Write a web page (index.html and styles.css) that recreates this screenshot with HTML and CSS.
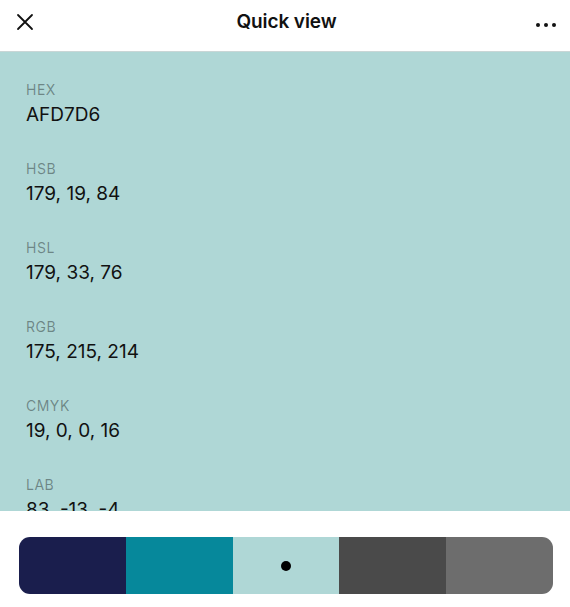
FILE: index.html
```html
<!DOCTYPE html>
<html>
<head>
<meta charset="utf-8">
<link rel="stylesheet" href="styles.css">
</head>
<body>
<div class="app">
  <header class="topbar">
    <button class="icon-btn close" aria-label="Close">
      <svg width="18" height="18" viewBox="0 0 18 18"><path d="M2 2 L16 16 M16 2 L2 16" stroke="#111" stroke-width="1.8" fill="none" stroke-linecap="round"/></svg>
    </button>
    <h1 class="title">Quick view</h1>
    <button class="icon-btn more" aria-label="More">
      <svg width="22" height="6" viewBox="0 0 22 6"><circle cx="3" cy="3" r="2" fill="#111"/><circle cx="11" cy="3" r="2" fill="#111"/><circle cx="19" cy="3" r="2" fill="#111"/></svg>
    </button>
  </header>
  <main class="swatch">
    <div class="field"><div class="label">HEX</div><div class="value">AFD7D6</div></div>
    <div class="field"><div class="label">HSB</div><div class="value">179, 19, 84</div></div>
    <div class="field"><div class="label">HSL</div><div class="value">179, 33, 76</div></div>
    <div class="field"><div class="label">RGB</div><div class="value">175, 215, 214</div></div>
    <div class="field"><div class="label">CMYK</div><div class="value">19, 0, 0, 16</div></div>
    <div class="field"><div class="label">LAB</div><div class="value">83, -13, -4</div></div>
  </main>
  <footer class="bottom">
    <div class="palette">
      <div class="chip c1"></div>
      <div class="chip c2"></div>
      <div class="chip c3 active"><span class="dot"></span></div>
      <div class="chip c4"></div>
      <div class="chip c5"></div>
    </div>
  </footer>
</div>
</body>
</html>
```
FILE: styles.css
```css
* { box-sizing: border-box; }
html, body { margin: 0; padding: 0; }
body {
  width: 570px;
  height: 607px;
  overflow: hidden;
  background: #fff;
  font-family: Inter, "Noto Sans", sans-serif;
  color: #111;
}
.app { display: flex; flex-direction: column; height: 607px; }
.topbar {
  height: 52px;
  flex: none;
  display: flex;
  align-items: flex-start;
  justify-content: space-between;
  padding: 0 10px 0 15px;
  border-bottom: 1px solid #c9d6d6;
}
.icon-btn {
  background: none;
  border: 0;
  padding: 0;
  display: flex;
  align-items: center;
  justify-content: center;
  cursor: pointer;
}
.close { width: 20px; height: 20px; margin-top: 12px; }
.more { width: 28px; height: 20px; margin-top: 15px; }
.title {
  margin: 10px 0 0 6px;
  font-size: 19px;
  line-height: 24px;
  font-weight: 600;
  letter-spacing: -0.1px;
}
.swatch {
  flex: none;
  height: 459px;
  overflow: hidden;
  background: #afd7d6;
  padding: 29px 26px 0;
  display: flex;
  flex-direction: column;
  gap: 33px;
}
.field { display: flex; flex-direction: column; gap: 5px; }
.label {
  font-size: 14px;
  line-height: 17px;
  letter-spacing: 0.5px;
  color: rgba(0, 0, 0, 0.38);
}
.value {
  font-size: 19px;
  line-height: 24px;
  color: #111;
}
.bottom {
  flex: 1;
  padding: 26px 17px 0 19px;
}
.palette {
  display: flex;
  height: 57px;
  border-radius: 11px;
  overflow: hidden;
}
.chip { flex: 1; display: flex; align-items: center; justify-content: center; }
.c1 { background: #1a1e4d; }
.c2 { background: #06889b; }
.c3 { background: #afd7d6; }
.c4 { background: #4a4a4a; }
.c5 { background: #6d6d6d; }
.dot { width: 10px; height: 10px; border-radius: 50%; background: #000; }
```
